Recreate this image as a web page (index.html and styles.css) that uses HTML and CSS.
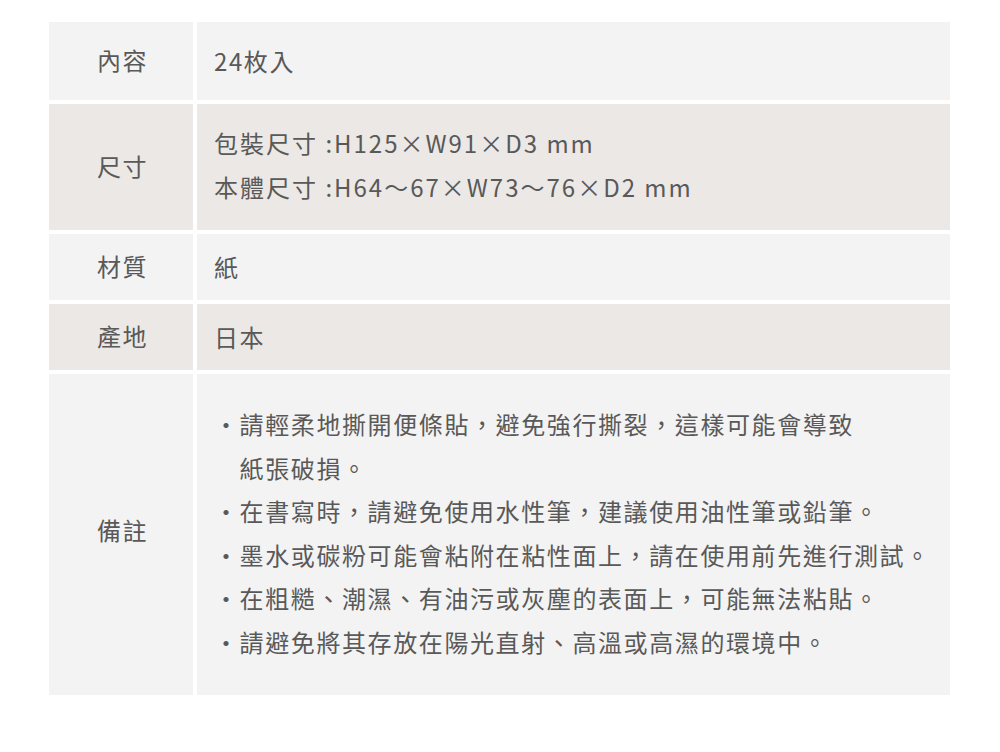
FILE: index.html
```html
<!DOCTYPE html>
<html lang="zh-Hant">
<head>
<meta charset="utf-8">
<link rel="stylesheet" href="styles.css">
</head>
<body>
<div class="spec">
  <div class="label odd">內容</div>
  <div class="value odd r1">24枚入</div>

  <div class="label even">尺寸</div>
  <div class="value even r2">
    <div>包裝尺寸 :H125×W91×D3 mm</div>
    <div>本體尺寸 :H64～67×W73～76×D2 mm</div>
  </div>

  <div class="label odd">材質</div>
  <div class="value odd r3">紙</div>

  <div class="label even">產地</div>
  <div class="value even r3">日本</div>

  <div class="label odd tall">備註</div>
  <div class="value odd r5">
    <ul class="notes">
      <li><span class="dot">・</span><span>請輕柔地撕開便條貼，避免強行撕裂，這樣可能會導致<br>紙張破損。</span></li>
      <li><span class="dot">・</span><span>在書寫時，請避免使用水性筆，建議使用油性筆或鉛筆。</span></li>
      <li><span class="dot">・</span><span>墨水或碳粉可能會粘附在粘性面上，請在使用前先進行測試。</span></li>
      <li><span class="dot">・</span><span>在粗糙、潮濕、有油污或灰塵的表面上，可能無法粘貼。</span></li>
      <li><span class="dot">・</span><span>請避免將其存放在陽光直射、高溫或高濕的環境中。</span></li>
    </ul>
  </div>
</div>
</body>
</html>
```
FILE: styles.css
```css
html, body {
  margin: 0;
  padding: 0;
  background: #ffffff;
}
body {
  font-family: "Noto Sans CJK TC", "Noto Sans", sans-serif;
  color: #595959;
  font-size: 24px;
  letter-spacing: 1.6px;
  line-height: 44px;
}
.spec {
  display: grid;
  grid-template-columns: 144px 753px;
  column-gap: 4px;
  row-gap: 4px;
  margin: 22px 0 0 49px;
}
.odd { background: #f3f3f3; }
.even { background: #ebe8e5; }
.label {
  display: flex;
  align-items: center;
  justify-content: center;
  padding-left: 3px;
  padding-bottom: 3px;
}
.label.tall {
  padding-bottom: 10px;
}
.value {
  padding-left: 17px;
  padding-right: 10px;
}
.r1 { padding-top: 17px; padding-bottom: 17px; }
.r2 { padding-top: 17px; padding-bottom: 21px; letter-spacing: 2px; }
.r3 { padding-top: 11px; padding-bottom: 11px; }
.r5 { padding-top: 28px; padding-bottom: 32px; }
.notes {
  list-style: none;
  margin: 0;
  padding: 0;
  line-height: 43.5px;
}
.notes li {
  display: flex;
}
.dot {
  flex: none;
}
```
